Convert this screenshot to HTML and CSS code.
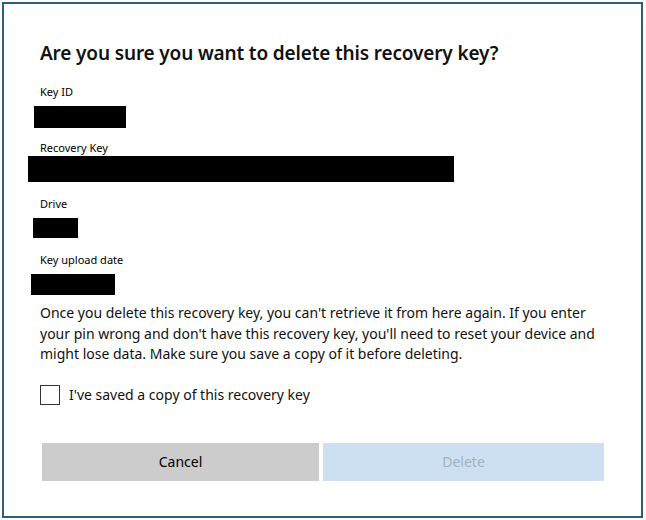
FILE: index.html
```html
<!DOCTYPE html>
<html lang="en">
<head>
<meta charset="utf-8">
<title>Delete recovery key</title>
<link rel="stylesheet" href="styles.css">
</head>
<body>
<div class="dialog">
  <div class="content">
    <h1 class="title">Are you sure you want to delete this recovery key?</h1>
    <div class="label label-first">Key ID</div>
    <div class="redact redact-id"></div>
    <div class="label label-tight">Recovery Key</div>
    <div class="redact redact-key"></div>
    <div class="label">Drive</div>
    <div class="redact redact-drive"></div>
    <div class="label">Key upload date</div>
    <div class="redact redact-date"></div>
    <p class="message">Once you delete this recovery key, you can't retrieve it from here again. If you enter<br>your pin wrong and don't have this recovery key, you'll need to reset your device and<br>might lose data. Make sure you save a copy of it before deleting.</p>
    <label class="check-row">
      <span class="checkbox"></span>
      <span class="check-text">I've saved a copy of this recovery key</span>
    </label>
    <div class="buttons">
      <button class="btn btn-cancel">Cancel</button>
      <button class="btn btn-delete" disabled>Delete</button>
    </div>
  </div>
</div>
</body>
</html>
```
FILE: styles.css
```css
html, body {
  margin: 0;
  padding: 0;
  background: #ffffff;
}
body {
  width: 646px;
  height: 520px;
  overflow: hidden;
  font-family: "Noto Sans", "Open Sans", sans-serif;
  color: #000000;
}
.dialog {
  margin: 2px 3px 0 2px;
  height: 512px;
  border: 2px solid #2b5f7c;
  background: #ffffff;
}
.content {
  padding: 35px 0 0 36px;
  display: flex;
  flex-direction: column;
  align-items: flex-start;
}
.title {
  margin: 0;
  font-size: 19px;
  font-weight: 600;
  line-height: 28px;
  letter-spacing: -0.15px;
  color: #111111;
}
.label {
  font-size: 11px;
  line-height: 16px;
  margin-top: 14px;
  color: #000000;
}
.label-first { margin-top: 17px; }
.label-tight { margin-top: 12px; }
.redact {
  background: #000000;
  margin-top: 6px;
}
.redact-id { width: 92px; height: 22px; margin-left: -6px; }
.redact-key { width: 426px; height: 26px; margin-left: -12px; margin-top: 0; }
.redact-drive { width: 45px; height: 20px; margin-left: -7px; }
.redact-date { width: 84px; height: 21px; margin-left: -9px; }
.message {
  margin: 8px 0 0 0;
  font-size: 14px;
  line-height: 20.5px;
  color: #111111;
}
.check-row {
  display: flex;
  align-items: center;
  gap: 9px;
  margin-top: 20px;
  font-size: 14px;
  line-height: 20px;
}
.checkbox {
  width: 18px;
  height: 18px;
  border: 1px solid #333333;
  background: #ffffff;
}
.check-text { color: #111111; }
.buttons {
  display: flex;
  gap: 4px;
  margin: 38px 0 0 2px;
}
.btn {
  height: 38px;
  border: none;
  font-family: "Noto Sans", "Open Sans", sans-serif;
  font-size: 14px;
  padding: 0;
}
.btn-cancel {
  width: 277px;
  background: #cccccc;
  color: #000000;
}
.btn-delete {
  width: 281px;
  background: #cce0f2;
  color: #a3b1bf;
}
```
